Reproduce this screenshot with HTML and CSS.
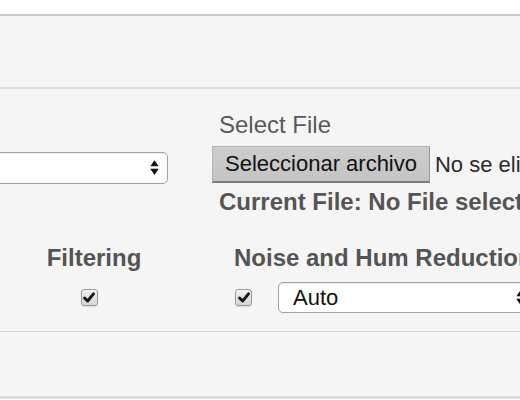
FILE: index.html
```html
<!DOCTYPE html>
<html>
<head>
<meta charset="utf-8">
<link rel="stylesheet" href="styles.css">
</head>
<body>
<div class="topbar"></div>
<div class="panel">
  <div class="section section-top"></div>
  <div class="section section-main">
    <div class="row row-file">
      <div class="col-a">
        <div class="select select-left">
          <svg class="arrows" width="9" height="16" viewBox="0 0 9 16"><polygon points="0.3,6.3 4.5,0.2 8.7,6.3" fill="#111"/><polygon points="0.3,8.8 4.5,15 8.7,8.8" fill="#111"/></svg>
        </div>
      </div>
      <div class="col-b">
        <div class="label">Select File</div>
        <div class="file">
          <span class="btn">Seleccionar archivo</span>
          <span class="nofile">No se eligió archivo</span>
        </div>
        <div class="current">Current File: No File selected</div>
      </div>
    </div>
    <div class="row row-opts">
      <div class="col-filter">
        <div class="heading">Filtering</div>
        <span class="check check-filter"><svg width="12" height="11" viewBox="0 0 12 11"><path d="M1.6 6.1 L4.6 9 L10.5 1.8" fill="none" stroke="#151515" stroke-width="2.9" stroke-linecap="round" stroke-linejoin="round"/></svg></span>
      </div>
      <div class="col-noise">
        <div class="heading">Noise and Hum Reduction</div>
        <div class="noise-line">
          <span class="check"><svg width="12" height="11" viewBox="0 0 12 11"><path d="M1.6 6.1 L4.6 9 L10.5 1.8" fill="none" stroke="#151515" stroke-width="2.9" stroke-linecap="round" stroke-linejoin="round"/></svg></span>
          <div class="select select-auto">
            <span class="select-text">Auto</span>
            <svg class="arrows" width="9" height="16" viewBox="0 0 9 16"><polygon points="0.3,6.3 4.5,0.2 8.7,6.3" fill="#111"/><polygon points="0.3,8.8 4.5,15 8.7,8.8" fill="#111"/></svg>
          </div>
        </div>
      </div>
    </div>
  </div>
  <div class="section section-bottom"></div>
</div>
</body>
</html>
```

FILE: styles.css
```css
html, body {
  margin: 0;
  padding: 0;
  overflow: hidden;
  background: #ffffff;
}

body {
  width: 520px;
  height: 400px;
  font-family: "Liberation Sans", Arial, Helvetica, sans-serif;
  color: #555555;
}

.topbar {
  height: 14px;
  background: #ffffff;
}

.panel {
  background: #f5f5f5;
  border-top: 2px solid #c9c9c9;
}

.section-top {
  height: 71px;
  border-bottom: 2px solid #dcdcdc;
}

.section-main {
  height: 243px;
  box-sizing: border-box;
  padding-top: 22px;
  border-bottom: 1px solid #d6d6d6;
}

.section-bottom {
  height: 64px;
  border-bottom: 3px solid #dedede;
}

.row-file {
  display: grid;
  grid-template-columns: 168px 1fr;
  column-gap: 44px;
  white-space: nowrap;
}

.col-a {
  padding-top: 41px;
}

.select {
  box-sizing: border-box;
  height: 32px;
  background: #ffffff;
  border: 1px solid #a2a2a2;
  border-radius: 5px;
  box-shadow: inset 0 1px 1px rgba(0,0,0,0.08);
  display: flex;
  align-items: center;
  justify-content: space-between;
}

.select-left {
  margin-left: -40px;
  justify-content: flex-end;
  padding-right: 8px;
}

.arrows {
  display: block;
  flex: none;
}

.label {
  font-size: 24px;
  line-height: 28px;
  padding-left: 7px;
  color: #5a5a5a;
}

.file {
  margin-top: 7px;
  display: flex;
  align-items: center;
}

.btn {
  box-sizing: border-box;
  height: 37px;
  padding: 0 12px;
  display: flex;
  align-items: center;
  font-size: 22px;
  line-height: 22px;
  color: #111111;
  background: linear-gradient(#cdcdcd, #c4c4c4);
  border: 1px solid #b4b4b4;
  border-bottom: 2px solid #7c7c7c;
  border-right-color: #9a9a9a;
}

.nofile {
  margin-left: 5px;
  font-size: 22px;
  color: #2a2a2a;
}

.current {
  margin-top: 5px;
  padding-left: 7px;
  font-size: 24px;
  line-height: 28px;
  font-weight: bold;
}

.row-opts {
  margin-top: 28px;
  display: grid;
  grid-template-columns: 188px 1fr;
  column-gap: 46px;
  white-space: nowrap;
}

.heading {
  font-size: 24px;
  line-height: 28px;
  font-weight: bold;
  color: #545454;
}

.col-filter {
  text-align: center;
}

.check {
  box-sizing: border-box;
  width: 17px;
  height: 17px;
  border: 1px solid #9c9c9c;
  border-radius: 3px;
  background: linear-gradient(#f0f0f0, #d6d6d6);
  box-shadow: 0 1px 1px rgba(0,0,0,0.12);
  display: inline-flex;
  align-items: center;
  justify-content: center;
  flex: none;
}

.check-filter {
  margin-top: 17px;
  margin-right: 10px;
}

.noise-line {
  margin-top: 10px;
  display: flex;
  align-items: center;
}

.noise-line .check {
  margin-left: 1px;
}

.select-auto {
  margin-left: 26px;
  width: 257px;
  height: 31px;
  padding: 0 9px 0 14px;
  flex: none;
}

.select-text {
  font-size: 22px;
  color: #111111;
}
```
